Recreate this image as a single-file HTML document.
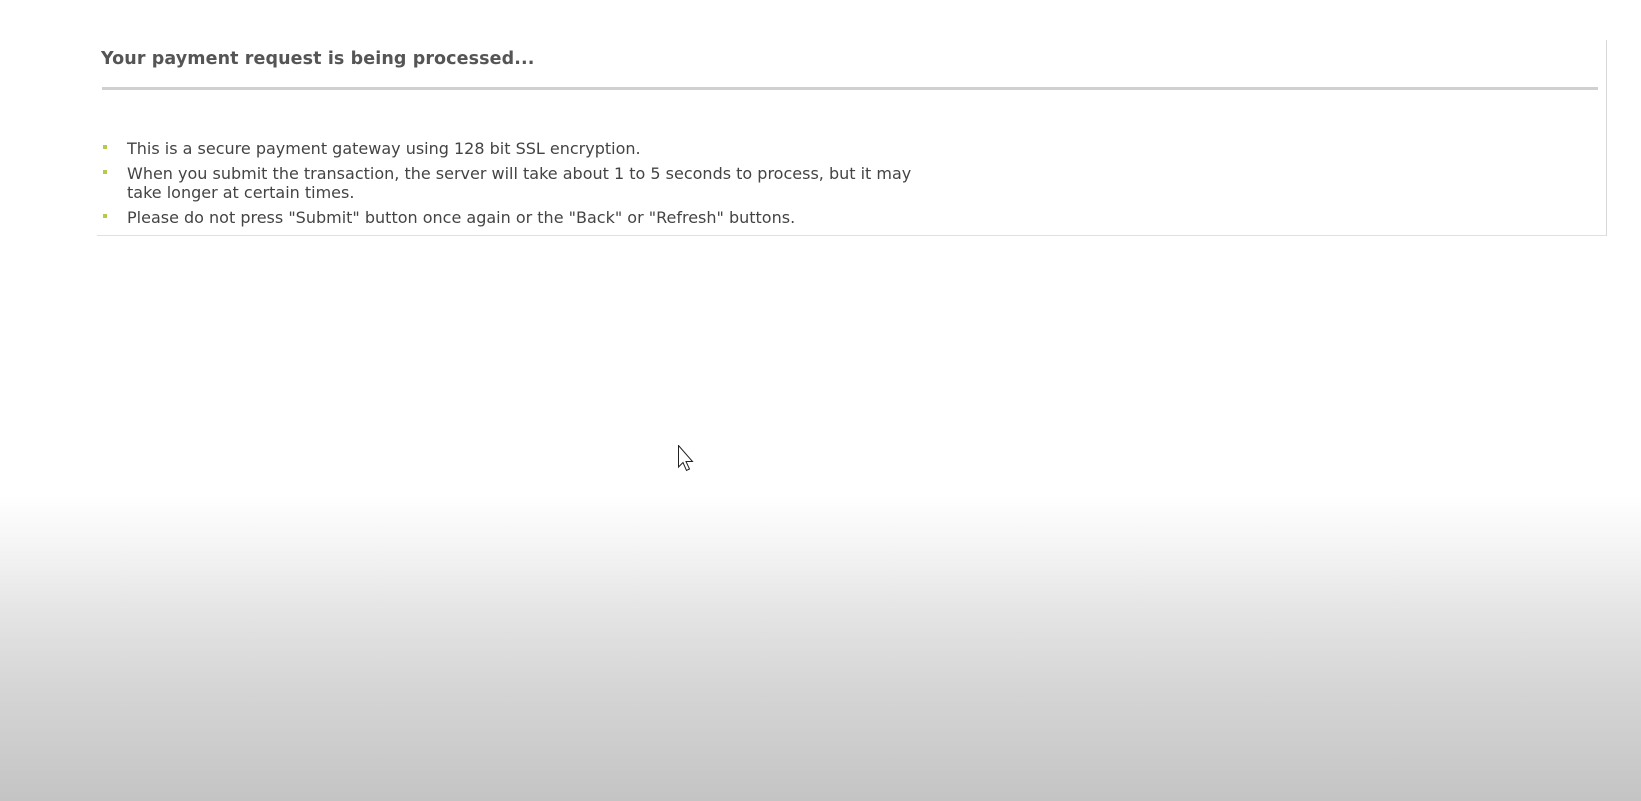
<!DOCTYPE html>
<html><head><style>
html,body{margin:0;padding:0;}
body{width:1641px;height:801px;overflow:hidden;position:relative;
background:linear-gradient(to bottom,#fff 0,#fff 495px,#f5f5f5 545px,#e6e6e6 605px,#d6d6d6 685px,#c4c4c4 801px);
font-family:"DejaVu Sans","Liberation Sans",sans-serif;}
.box{position:absolute;left:97px;top:40px;width:1509px;height:195px;border-right:1px solid #d8d8d8;border-bottom:1px solid #e0e0e0;background:#fff;}
h1{position:absolute;left:4px;top:9px;margin:0;font-size:17.5px;font-weight:bold;color:#555;letter-spacing:0.1px;}
.rule{position:absolute;left:5px;top:47px;width:1496px;height:3px;background:#d0d0d0;}
ul{position:absolute;left:0;top:99px;margin:0;padding:0;list-style:none;font-size:16px;color:#444;line-height:19px;}
li{position:relative;padding-left:30px;margin-bottom:6px;}
li:before{content:"";position:absolute;left:6px;top:6px;width:4px;height:4px;background:#b5c94a;}
.c{position:absolute;left:678px;top:445px;}
</style></head><body>
<div class="box">
<h1>Your payment request is being processed...</h1>
<div class="rule"></div>
<ul>
<li>This is a secure payment gateway using 128 bit SSL encryption.</li>
<li>When you submit the transaction, the server will take about 1 to 5 seconds to process, but it may<br>take longer at certain times.</li>
<li>Please do not press "Submit" button once again or the "Back" or "Refresh" buttons.</li>
</ul>
</div>
<svg class="c" width="18" height="28" viewBox="0 0 18 28"><path d="M0.5 0.5 L0.5 22 L5 17.5 L8.5 25.5 L11.5 24 L8 16.5 L14.5 16.5 Z" fill="#fff" stroke="#222" stroke-width="1"/></svg>
</body></html>
